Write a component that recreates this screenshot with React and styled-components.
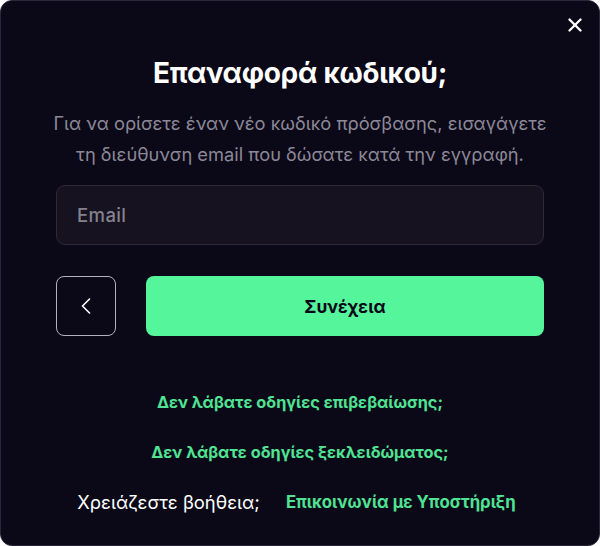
import React from 'react';
import styled, { createGlobalStyle } from 'styled-components';
import { X } from 'lucide-react';

const Global = createGlobalStyle`
  html, body {
    margin: 0;
    padding: 0;
    background: #ffffff;
  }
  * { box-sizing: border-box; }
`

const Panel = styled.div`
  position: relative;
  width: 600px;
  height: 546px;
  background: #0b0818;
  border: 1px solid #2a2738;
  border-radius: 12px;
  padding: 55px 55px 0;
  display: flex;
  flex-direction: column;
  align-items: center;
  font-family: Inter, "Noto Sans", sans-serif;
`

const Close = styled.button`
  position: absolute;
  top: 12px;
  right: 12px;
  width: 24px;
  height: 24px;
  padding: 0;
  border: none;
  background: none;
  color: #ffffff;
  display: flex;
  align-items: center;
  justify-content: center;
`

const Title = styled.h2`
  margin: 0;
  font-size: 28px;
  line-height: 34px;
  font-weight: 700;
  color: #ffffff;
  letter-spacing: -0.3px;
`

const Subtitle = styled.p`
  margin: 18px -20px 0;
  font-size: 18.3px;
  line-height: 31px;
  color: #8b8897;
  text-align: center;
  white-space: nowrap;
`

const Input = styled.input`
  margin-top: 15px;
  width: 100%;
  height: 60px;
  border-radius: 9px;
  border: 1px solid #2c2939;
  background: #16121f;
  padding: 0 20px;
  font-family: inherit;
  font-size: 18.5px;
  font-weight: 500;
  letter-spacing: 0.4px;
  color: #ffffff;
  outline: none;
  &::placeholder { color: #85828f; }
`

const Actions = styled.div`
  margin-top: 31px;
  width: 100%;
  display: flex;
  gap: 30px;
`

const Back = styled.button`
  flex: 0 0 60px;
  height: 60px;
  border-radius: 8px;
  border: 1.5px solid #b4b2bc;
  background: transparent;
  color: #ffffff;
  display: flex;
  align-items: center;
  justify-content: center;
  padding: 0;
`

const Continue = styled.button`
  flex: 1;
  height: 60px;
  border-radius: 8px;
  border: none;
  background: #55f59c;
  color: #0b0818;
  font-family: inherit;
  font-size: 17.5px;
  font-weight: 700;
`

const Links = styled.div`
  margin-top: 56px;
  width: 100%;
  display: flex;
  flex-direction: column;
  align-items: center;
  gap: 30px;
`

const Row = styled.div`
  display: flex;
  align-items: center;
  justify-content: center;
  gap: ${p => p.$gap || 0}px;
  padding-right: ${p => p.$shift || 0}px;
  line-height: 20px;
  white-space: nowrap;
`

const Link = styled.a`
  color: #4fe393;
  font-size: ${p => p.$size || 16.3}px;
  font-weight: 700;
  text-decoration: none;
`

const Plain = styled.span`
  color: #ffffff;
  font-size: 18.4px;
`

export default function App() {
  return (
    <>
      <Global />
      <Panel>
        <Close aria-label="close"><X size={22} strokeWidth={2.6} /></Close>
        <Title>Επαναφορά κωδικού;</Title>
        <Subtitle>
          Για να ορίσετε έναν νέο κωδικό πρόσβασης, εισαγάγετε<br />
          τη διεύθυνση email που δώσατε κατά την εγγραφή.
        </Subtitle>
        <Input placeholder="Email" />
        <Actions>
          <Back aria-label="back">
            <svg width="10" height="16" viewBox="0 0 10 16" fill="none">
              <polyline points="8.5,1 1.5,8 8.5,15" stroke="currentColor" strokeWidth="1.6" strokeLinecap="round" strokeLinejoin="round" />
            </svg>
          </Back>
          <Continue>Συνέχεια</Continue>
        </Actions>
        <Links>
          <Row><Link href="#">Δεν λάβατε οδηγίες επιβεβαίωσης;</Link></Row>
          <Row><Link href="#">Δεν λάβατε οδηγίες ξεκλειδώματος;</Link></Row>
          <Row $gap={26} $shift={7}>
            <Plain>Χρειάζεστε βοήθεια;</Plain>
            <Link href="#" $size={16.8}>Επικοινωνία με Υποστήριξη</Link>
          </Row>
        </Links>
      </Panel>
    </>
  );
}
